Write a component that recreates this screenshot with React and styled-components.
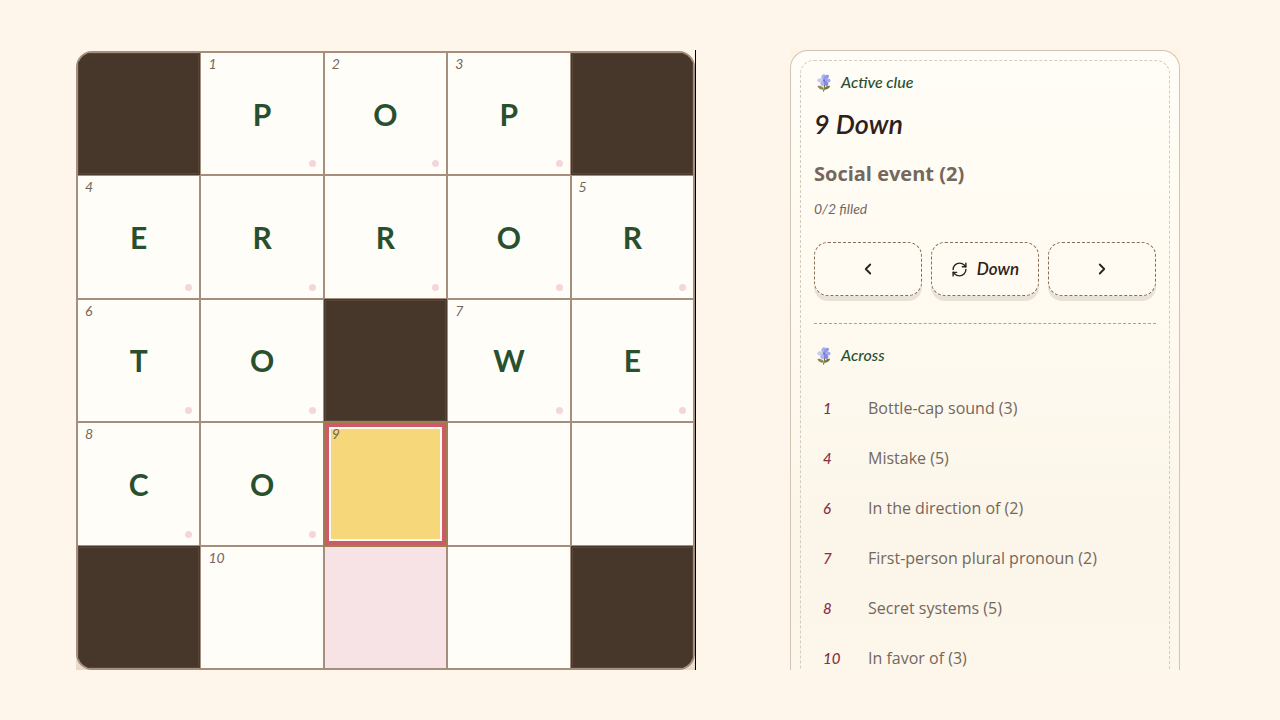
import React, { useState } from 'react';
import styled, { createGlobalStyle } from 'styled-components';
import { ChevronLeft, ChevronRight, RefreshCw } from 'lucide-react';

const hand = '"Bradley Hand", Lato, sans-serif';
const body = '"Trebuchet MS", "Open Sans", sans-serif';

const ROWS = ['#POP#', 'ERROR', 'TO#WE', 'CO...', '#...#'];

const NUMBERS = {
  '0-1': 1, '0-2': 2, '0-3': 3,
  '1-0': 4, '1-4': 5,
  '2-0': 6, '2-3': 7,
  '3-0': 8, '3-2': 9,
  '4-1': 10,
};

const ACROSS = [
  { number: 1, text: 'Bottle-cap sound (3)' },
  { number: 4, text: 'Mistake (5)' },
  { number: 6, text: 'In the direction of (2)' },
  { number: 7, text: 'First-person plural pronoun (2)' },
  { number: 8, text: 'Secret systems (5)' },
  { number: 10, text: 'In favor of (3)' },
];

const Flower = () => (
  <svg width="20" height="20" viewBox="0 0 20 20" aria-hidden="true">
    <path d="M10.4 12 C10.8 14.5 10.4 17 9.4 19.6" stroke="#7c7a45" strokeWidth="1.2" fill="none" />
    <path d="M10 17.6 C7 18 4.2 16.6 3.4 14 C6 13.4 9.4 14.6 10 17.6Z" fill="#8a8c55" />
    <path d="M10 17.6 C13 18 15.6 16.4 16.2 13.8 C13.2 13.4 10.6 14.8 10 17.6Z" fill="#6e763c" />
    <path d="M9.8 8 C6.4 6.4 6.8 3.2 9.2 2.4 C11.4 1.8 13 4.6 9.8 8Z" fill="#a9b0f0" />
    <path d="M9.8 8 C9.6 4.4 12 2 14.4 3 C16.2 4.2 14 7.6 9.8 8Z" fill="#9298ea" />
    <path d="M9.8 8.2 C12.4 5.6 16.4 6 16.6 8.4 C16.4 11 12 11.4 9.8 8.2Z" fill="#a4a9ee" />
    <path d="M9.8 8.2 C7.4 5.2 3.6 5.8 3.2 8.4 C3.4 11 7.4 11.2 9.8 8.2Z" fill="#c9cce8" />
    <path d="M9.8 8.2 C5.6 9.6 5.2 13 8 14 C10.8 14.2 11.4 11 9.8 8.2Z" fill="#b3b6ee" />
    <path d="M9.8 8.2 C9.2 12 10.8 14.6 13.4 13.8 C15.6 12.2 13.6 9 9.8 8.2Z" fill="#8388e2" />
    <circle cx="10" cy="8.2" r="1" fill="#6a65c4" />
  </svg>
);

const Cell = ({ value, number, selected, related, onSelect }) => (
  <CellButton
    type="button"
    $selected={selected}
    $related={related}
    aria-pressed={selected}
    onClick={onSelect}
  >
    {number && <CellNumber>{number}</CellNumber>}
    {value !== '.' && <span>{value}</span>}
    {value !== '.' && <Dot />}
  </CellButton>
);

const App = () => {
  const [selected, setSelected] = useState('3-2');

  return (
    <Page>
      <GlobalStyle />
      <BoardFrame>
        <Board>
          {ROWS.map((row, r) => row.split('').map((value, c) => {
            const id = `${r}-${c}`;
            return value === '#' ? <Block key={id} /> : (
              <Cell
                key={id}
                value={value}
                number={NUMBERS[id]}
                selected={selected === id}
                related={id === '4-2'}
                onSelect={() => setSelected(id)}
              />
            );
          }))}
        </Board>
      </BoardFrame>
      <PanelColumn>
        <Panel>
          <Stitching>
            <Label><Flower />Active clue</Label>
            <Title>9 Down</Title>
            <Clue>Social event (2)</Clue>
            <Progress>0/2 filled</Progress>
            <Controls>
              <Control type="button" aria-label="Previous clue"><ChevronLeft size={18} strokeWidth={2.4} /></Control>
              <Control type="button"><RefreshCw size={17} />Down</Control>
              <Control type="button" aria-label="Next clue"><ChevronRight size={18} strokeWidth={2.4} /></Control>
            </Controls>
            <Section>
              <Label><Flower />Across</Label>
              <ClueList>
                {ACROSS.map(({ number, text }) => (
                  <li key={number}>
                    <ClueRow type="button">
                      <ClueNumber>{number}</ClueNumber>
                      <span>{text}</span>
                    </ClueRow>
                  </li>
                ))}
              </ClueList>
            </Section>
          </Stitching>
        </Panel>
      </PanelColumn>
    </Page>
  );
};

const GlobalStyle = createGlobalStyle`
  * {
    box-sizing: border-box;
  }
  body {
    margin: 0;
    background: #fff6eb;
  }
`;

const Page = styled.main`
  display: grid;
  grid-template-columns: minmax(0, 620fr) minmax(0, 390fr);
  gap: 94px;
  align-items: start;
  height: 100vh;
  padding: 50px 100px 50px 76px;
  overflow: hidden;
`;

const BoardFrame = styled.div`
  padding-top: 1px;
  border-right: 1px solid #000;
  background: linear-gradient(#fff6eb 90%, #e6dac9);
`;

const Board = styled.div`
  display: grid;
  grid-template-columns: repeat(5, 1fr);
  grid-template-rows: repeat(5, 1fr);
  gap: 2px;
  aspect-ratio: 1;
  overflow: hidden;
  border: 2px solid #a58e7c;
  border-radius: 16px;
  background: #a58e7c;
`;

const Block = styled.div`
  background: #47362a;
  box-shadow: 0 0 0 1px #49382c, inset 0 0 0 1px #56463a;
`;

const CellButton = styled.button`
  position: relative;
  display: flex;
  align-items: center;
  justify-content: center;
  min-width: 0;
  padding: 0;
  border: 0;
  background: ${({ $selected, $related }) => ($selected && '#f6d87a') || ($related && '#f7e3e5') || '#fffdf7'};
  box-shadow: ${({ $selected }) => ($selected
    ? '0 0 0 2px #a07e50, inset 0 0 0 4px #cb5c67, inset 0 0 0 6px #fffaf0'
    : 'none')};
  color: #28502f;
  font: bold 30px/36px ${hand};
  cursor: pointer;
`;

const CellNumber = styled.span`
  position: absolute;
  top: 3px;
  left: 7px;
  color: #74675d;
  font: italic 14px/16px ${hand};
`;

const Dot = styled.i`
  position: absolute;
  right: 7px;
  bottom: 7px;
  width: 7px;
  height: 7px;
  border-radius: 50%;
  background: #f4d6da;
`;

const PanelColumn = styled.aside`
  height: calc(100vh - 100px);
  overflow: hidden;
  background: #fdf4e4;
`;

const Panel = styled.div`
  min-height: 100%;
  padding: 9px 9px 0;
  border: 1px solid #d2c3b2;
  border-bottom: 0;
  border-radius: 18px 18px 0 0;
  background: linear-gradient(#fffdf7, #fffbf1 35%, #fcf6ea 70%, #fdf6ea);
`;

const Stitching = styled.div`
  padding: 11px 13px 32px;
  border: 1px dashed #d3ccc1;
  border-bottom: 0;
  border-radius: 14px 14px 0 0;
`;

const Label = styled.h2`
  display: flex;
  align-items: center;
  gap: 7px;
  margin: 0;
  color: #28502f;
  font: italic 500 16px/20px ${hand};
`;

const Title = styled.h1`
  margin: 12px 0 0;
  color: #2e211a;
  font: italic 600 27px/40px ${hand};
`;

const Clue = styled.p`
  margin: 13px 0 0;
  color: #74675d;
  font: bold 20px/34px ${body};
`;

const Progress = styled.p`
  margin: 8px 0 0;
  color: #74675d;
  font: italic 14px/20px ${hand};
`;

const Controls = styled.div`
  display: grid;
  grid-template-columns: repeat(3, 1fr);
  gap: 9px;
  margin-top: 23px;
`;

const Control = styled.button`
  display: flex;
  align-items: center;
  justify-content: center;
  gap: 9px;
  height: 54px;
  padding: 0;
  border: 1px dashed #8b6c55;
  border-radius: 14px;
  background: #fffbf2;
  box-shadow: 0 5px 0 #e9e2d7;
  color: #2e211a;
  font: italic 600 17px/20px ${hand};
  cursor: pointer;
`;

const Section = styled.section`
  margin-top: 27px;
  padding-top: 21px;
  border-top: 1px dashed #b99f83;
`;

const ClueList = styled.ul`
  margin: 18px 0 0;
  padding: 0;
  list-style: none;
`;

const ClueRow = styled.button`
  display: grid;
  grid-template-columns: 45px 1fr;
  align-items: center;
  width: 100%;
  height: 50px;
  padding: 0 9px;
  border: 0;
  background: none;
  color: #74675d;
  font: 500 16px/24px ${body};
  text-align: left;
  cursor: pointer;
`;

const ClueNumber = styled.span`
  color: #8b2f43;
  font: italic 500 15px/20px ${hand};
`;

export default App;
